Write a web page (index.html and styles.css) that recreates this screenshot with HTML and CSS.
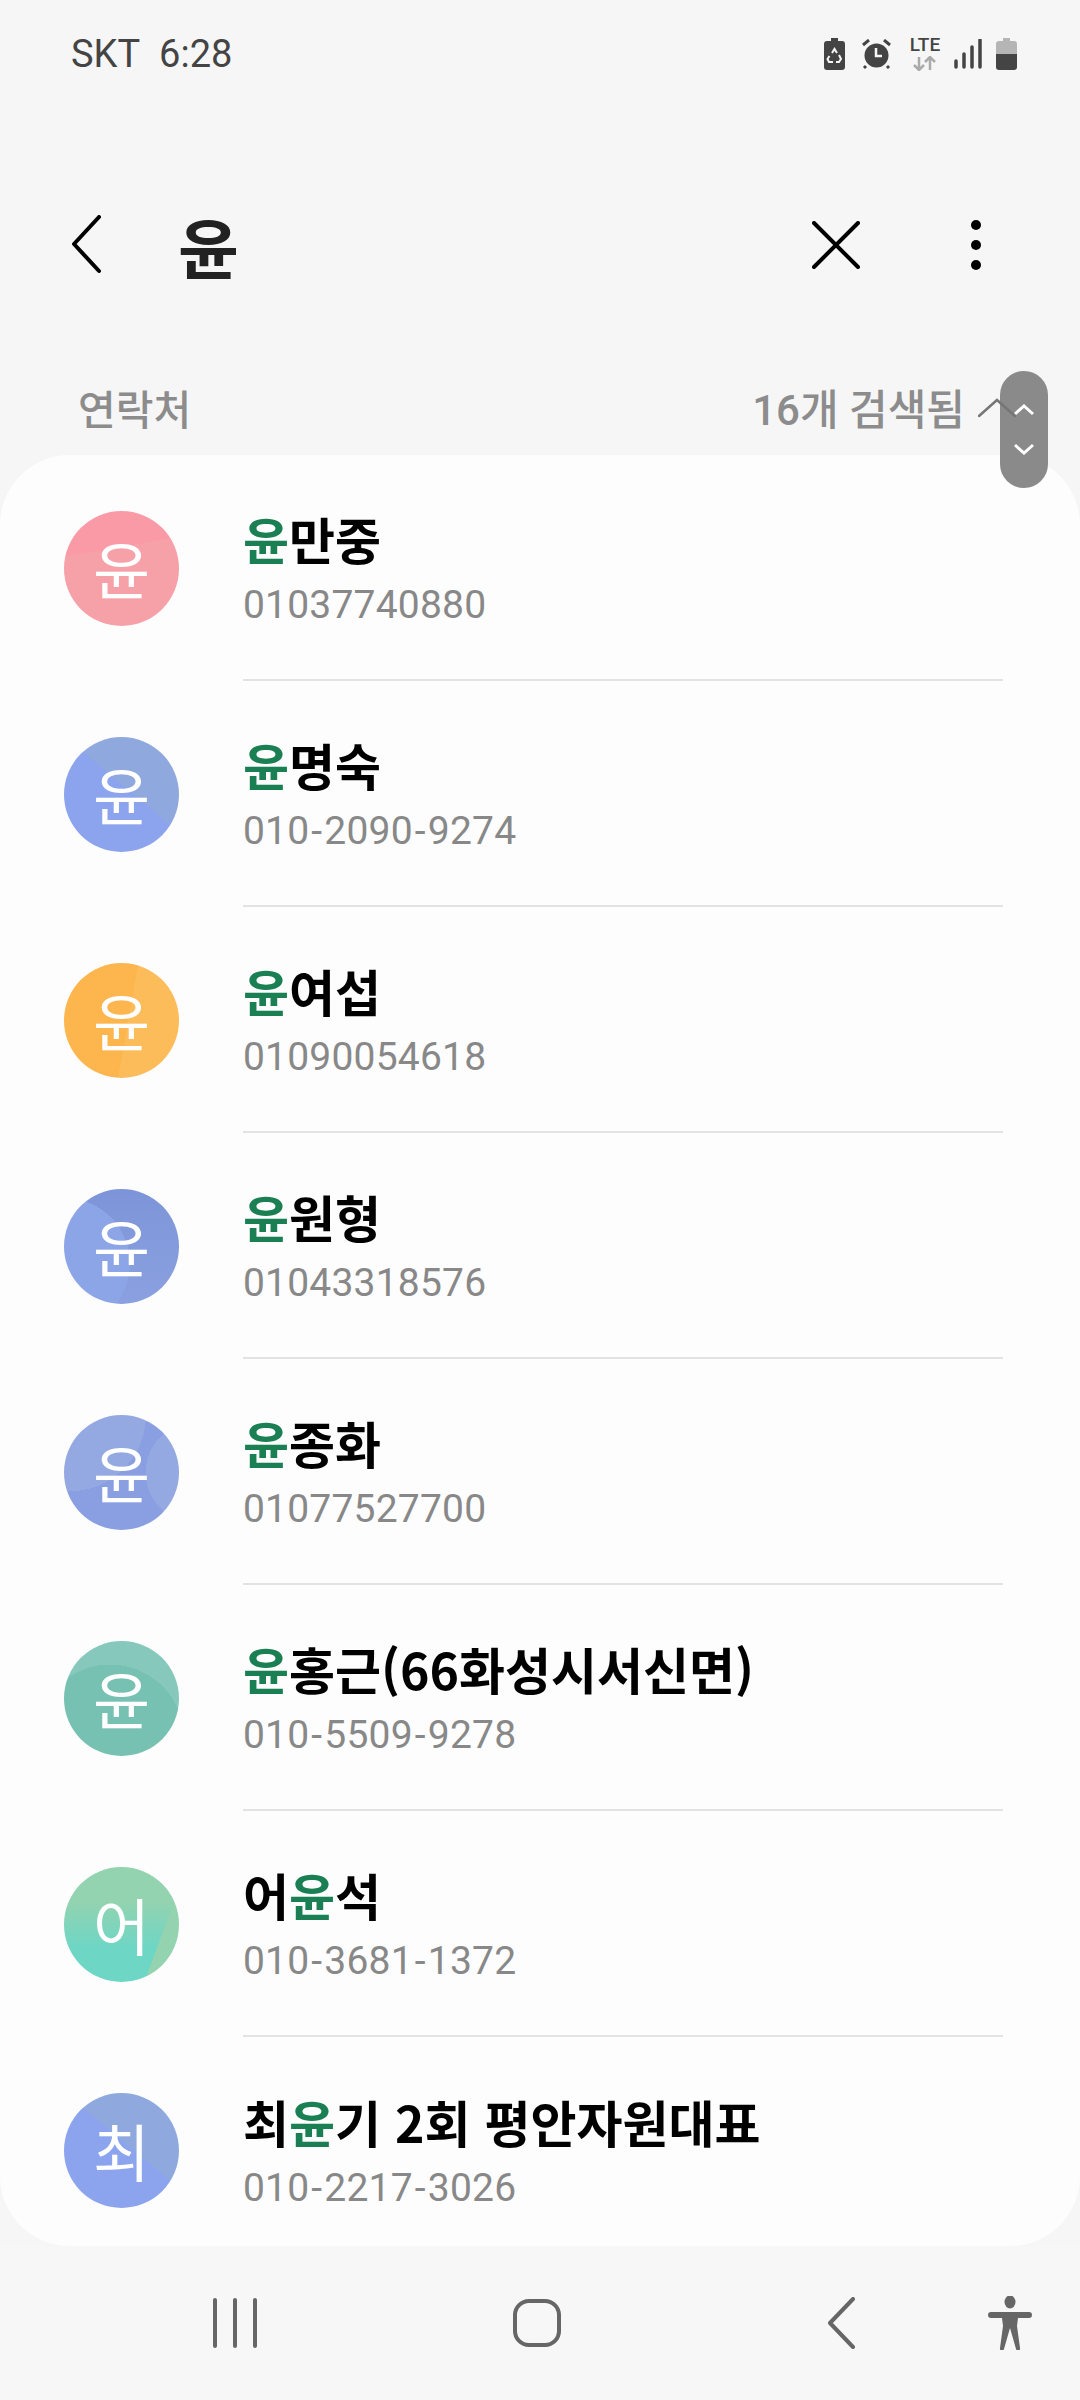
FILE: index.html
```html
<!DOCTYPE html>
<html lang="ko">
<head>
    <meta charset="UTF-8">
    <meta name="viewport" content="width=device-width, initial-scale=1.0">
    <title>연락처 검색</title>
    <link rel="stylesheet" href="styles.css">
</head>
<body>
    <!-- Status bar -->
    <div class="status-bar">
        <div class="status-text"><span>SKT</span><span>6:28</span></div>
        <div class="status-icons">
            <svg width="21" height="32" viewBox="0 0 21 32"><path d="M7 0h7v3h4a3 3 0 0 1 3 3v23a3 3 0 0 1-3 3H3a3 3 0 0 1-3-3V6a3 3 0 0 1 3-3h4z" fill="#444"/><path d="M8 15l2.500-4 2.500 4M15 17l2 4-2 3h-3M9 24H5l-1.500-3 2-3" fill="none" stroke="#f6f6f6" stroke-width="2"/></svg>
            <svg class="alarm" width="29" height="30" viewBox="0 0 29 30"><circle cx="14.500" cy="16.500" r="12" fill="#444"/><path d="M1 6l6-5M28 6l-6-5M4 27l-2 2M25 27l2 2" stroke="#444" stroke-width="3" fill="none"/><path d="M14 9v8h6" stroke="#f6f6f6" stroke-width="2.500" fill="none"/></svg>
            <div class="lte">
                <span>LTE</span>
                <svg width="24" height="15" viewBox="0 0 24 15"><path d="M6 1v13M1 9l5 5 5-5M17 14V1M12 6l5-5 5 5" fill="none" stroke="#aaa" stroke-width="2.500"/></svg>
            </div>
            <svg class="signal" width="28" height="30" viewBox="0 0 28 30"><path d="M2 22v6M10 15v13M18 8v20M26 1v27" stroke="#444" stroke-width="3.500" stroke-linecap="round"/></svg>
            <svg width="21" height="32" viewBox="0 0 21 32"><path d="M7 0h7v3h4a3 3 0 0 1 3 3v10H0V6a3 3 0 0 1 3-3h4z" fill="#b5b5b5"/><path d="M0 16h21v13a3 3 0 0 1-3 3H3a3 3 0 0 1-3-3z" fill="#444"/></svg>
        </div>
    </div>

    <!-- App bar -->
    <header class="app-bar">
        <svg class="back-icon" width="32" height="60" viewBox="0 0 32 60"><path d="M29 2L4 29l25 27" fill="none" stroke="#000" stroke-width="4" stroke-linecap="round" stroke-linejoin="round"/></svg>
        <h1>윤</h1>
        <svg class="close-icon" width="48" height="48" viewBox="0 0 48 48"><path d="M2 2l44 44M46 2L2 46" stroke="#000" stroke-width="4" stroke-linecap="round"/></svg>
        <div class="more-icon"><i></i><i></i><i></i></div>
    </header>

    <!-- Section heading -->
    <div class="section">
        <span class="section-title">연락처</span>
        <span class="section-count">16개 검색됨</span>
        <div class="scroll-thumb">
            <svg width="22" height="12" viewBox="0 0 22 12"><path d="M2 10l9-8 9 8" fill="none" stroke="#fff" stroke-width="3"/></svg>
            <svg width="22" height="12" viewBox="0 0 22 12"><path d="M2 2l9 8 9-8" fill="none" stroke="#fff" stroke-width="3"/></svg>
        </div>
        <svg class="section-chevron" width="38" height="20" viewBox="0 0 38 20"><path d="M1 18L19 2l18 16" fill="none" stroke="#767676" stroke-width="2.500" stroke-linecap="round"/></svg>
    </div>

    <!-- Contacts -->
    <main class="card">
        <div class="row">
            <div class="avatar pink">윤</div>
            <div class="info">
                <div class="name"><b>윤</b>만중</div>
                <div class="phone">01037740880</div>
            </div>
        </div>
        <div class="row">
            <div class="avatar periwinkle">윤</div>
            <div class="info">
                <div class="name"><b>윤</b>명숙</div>
                <div class="phone">010<span class="dash">-</span>2090<span class="dash">-</span>9274</div>
            </div>
        </div>
        <div class="row">
            <div class="avatar orange">윤</div>
            <div class="info">
                <div class="name"><b>윤</b>여섭</div>
                <div class="phone">01090054618</div>
            </div>
        </div>
        <div class="row">
            <div class="avatar blue">윤</div>
            <div class="info">
                <div class="name"><b>윤</b>원형</div>
                <div class="phone">01043318576</div>
            </div>
        </div>
        <div class="row">
            <div class="avatar sky">윤</div>
            <div class="info">
                <div class="name"><b>윤</b>종화</div>
                <div class="phone">01077527700</div>
            </div>
        </div>
        <div class="row">
            <div class="avatar teal">윤</div>
            <div class="info">
                <div class="name"><b>윤</b>홍근(66화성시서신면)</div>
                <div class="phone">010<span class="dash">-</span>5509<span class="dash">-</span>9278</div>
            </div>
        </div>
        <div class="row">
            <div class="avatar mint">어</div>
            <div class="info">
                <div class="name">어<b>윤</b>석</div>
                <div class="phone">010<span class="dash">-</span>3681<span class="dash">-</span>1372</div>
            </div>
        </div>
        <div class="row">
            <div class="avatar periwinkle">최</div>
            <div class="info">
                <div class="name">최<b>윤</b>기 2회 평안자원대표</div>
                <div class="phone">010<span class="dash">-</span>2217<span class="dash">-</span>3026</div>
            </div>
        </div>
    </main>

    <!-- Navigation bar -->
    <nav class="nav-bar">
        <svg class="nav-recents" width="44" height="50" viewBox="0 0 44 50"><path d="M2 2v46M22 2v46M42 2v46" stroke="#666" stroke-width="4" stroke-linecap="round"/></svg>
        <svg class="nav-home" width="50" height="50" viewBox="0 0 50 50"><rect x="3" y="3" width="44" height="44" rx="14" fill="none" stroke="#666" stroke-width="4"/></svg>
        <svg class="nav-back" width="30" height="52" viewBox="0 0 30 52"><path d="M27 2L4 26l23 24" fill="none" stroke="#666" stroke-width="4" stroke-linecap="round" stroke-linejoin="round"/></svg>
        <svg class="nav-access" width="44" height="54" viewBox="0 0 44 54"><ellipse cx="22" cy="6" rx="5.500" ry="6.500" fill="#666"/><path d="M3 16h38a3 3 0 0 1 0 6H30l-1 8 3 22a2 2 0 0 1-4 1l-6-21-6 21a2 2 0 0 1-4-1l3-22-1-8H3a3 3 0 0 1 0-6z" fill="#666"/></svg>
    </nav>
</body>
</html>
```

FILE: styles.css
```css
* {
    box-sizing: border-box;
    margin: 0;
    padding: 0;
}

body {
    width: 1080px;
    height: 2400px;
    overflow: hidden;
    background-color: #f6f6f6;
    font-family: Roboto, "Noto Sans CJK KR", sans-serif;
    color: #000;
}

/* Status bar */
.status-bar {
    height: 108px;
    padding: 0 63px 0 71px;
    display: flex;
    justify-content: space-between;
    align-items: center;
}

.status-text {
    display: flex;
    gap: 19px;
    font-size: 38px;
    color: #444;
}

.status-icons {
    display: flex;
    align-items: center;
    gap: 14px;
    height: 34px;
}

.alarm {
    margin-left: 3px;
}

.lte {
    width: 34px;
    display: flex;
    flex-direction: column;
    align-items: center;
    gap: 3px;
    margin-left: 3px;
}

.lte span {
    font-size: 19px;
    line-height: 16px;
    font-weight: 500;
    color: #444;
}

.signal {
    margin-left: -2px;
}

/* App bar */
.app-bar {
    height: 274px;
    padding-left: 70px;
    display: flex;
    align-items: center;
}

.app-bar h1 {
    font-family: "Noto Sans CJK KR", sans-serif;
    font-size: 66px;
    line-height: 70px;
    font-weight: 700;
    color: #222;
    margin-left: 76px;
    flex: 1;
}

.close-icon {
    margin-right: 111px;
}

.more-icon {
    display: flex;
    flex-direction: column;
    gap: 10px;
    margin-right: 99px;
}

.more-icon i {
    width: 10px;
    height: 10px;
    border-radius: 50%;
    background-color: #000;
}

/* Section heading */
.section {
    position: relative;
    height: 73px;
    padding: 3px 0 0 78px;
    display: flex;
    align-items: flex-start;
    font-size: 41px;
    line-height: 52px;
    font-weight: 500;
    color: #8c8c8c;
}

.section-title {
    flex: 1;
}

.section-count {
    font-size: 42px;
    margin-right: 115px;
}

.section-chevron {
    position: absolute;
    left: 978px;
    top: 16px;
}

.scroll-thumb {
    position: absolute;
    left: 1000px;
    top: -11px;
    width: 48px;
    height: 117px;
    border-radius: 24px;
    background-color: #8a8a8a;
    display: flex;
    flex-direction: column;
    align-items: center;
    gap: 27px;
    padding-top: 33px;
}

/* Contact list */
.card {
    height: 1791px;
    overflow: hidden;
    background-color: #fdfdfd;
    border-radius: 70px;
}

.row {
    height: 226px;
    padding-left: 64px;
    display: flex;
    align-items: center;
    gap: 64px;
}

.avatar {
    width: 115px;
    height: 115px;
    flex-shrink: 0;
    border-radius: 50%;
    display: flex;
    align-items: center;
    justify-content: center;
    font-family: "Noto Sans CJK KR", sans-serif;
    font-size: 62px;
    font-weight: 400;
    color: #fff;
}

.pink {
    background: linear-gradient(170deg, #fa9aa6 0 34%, #f6a0a8 34% 100%);
}

.periwinkle {
    background: linear-gradient(40deg, #8ca3ee 0 55%, #8fa9df 55% 100%);
}

.orange {
    background: linear-gradient(100deg, #fdb54e 0 55%, #fdbc5a 55% 100%);
}

.blue {
    background: radial-gradient(circle at 0 65%, #8ca5e6 0 48%, transparent 48%), linear-gradient(#7d95d8, #8aa0e0);
}

.sky {
    background: radial-gradient(circle at 5% 0, #94a9e2 0 48%, transparent 48%), radial-gradient(circle at 115% 50%, #94a9e2 0 35%, transparent 35%), #899fe2;
}

.teal {
    background: radial-gradient(circle at 40% 85%, #76c1b1 0 62%, transparent 62%), #86c9bc;
}

.mint {
    background: linear-gradient(110deg, transparent 78%, #93d3b0 78%), linear-gradient(180deg, #93d3b0 0 30%, #6ed6c5 70% 100%);
}

.info {
    width: 760px;
    height: 100%;
    display: flex;
    flex-direction: column;
    justify-content: center;
    gap: 15px;
    border-bottom: 2px solid #e3e3e3;
    padding-top: 2px;
}

.row:last-child .info {
    border-bottom: 0;
}

.name {
    font-family: "Noto Sans CJK KR", sans-serif;
    font-size: 50px;
    line-height: 58px;
    font-weight: 700;
    white-space: nowrap;
}

.name b {
    font-weight: 700;
    color: #1a7f52;
}

.phone {
    font-size: 39px;
    line-height: 46px;
    letter-spacing: 0.2px;
    color: #888;
}

.dash {
    margin: 0 2px;
}

/* Navigation bar */
.nav-bar {
    height: 154px;
    background-color: #f7f7f7;
    display: flex;
    align-items: center;
    padding-left: 213px;
}

.nav-home {
    margin-left: 255px;
}

.nav-back {
    margin-left: 264px;
}

.nav-access {
    margin-left: 132px;
}
```
